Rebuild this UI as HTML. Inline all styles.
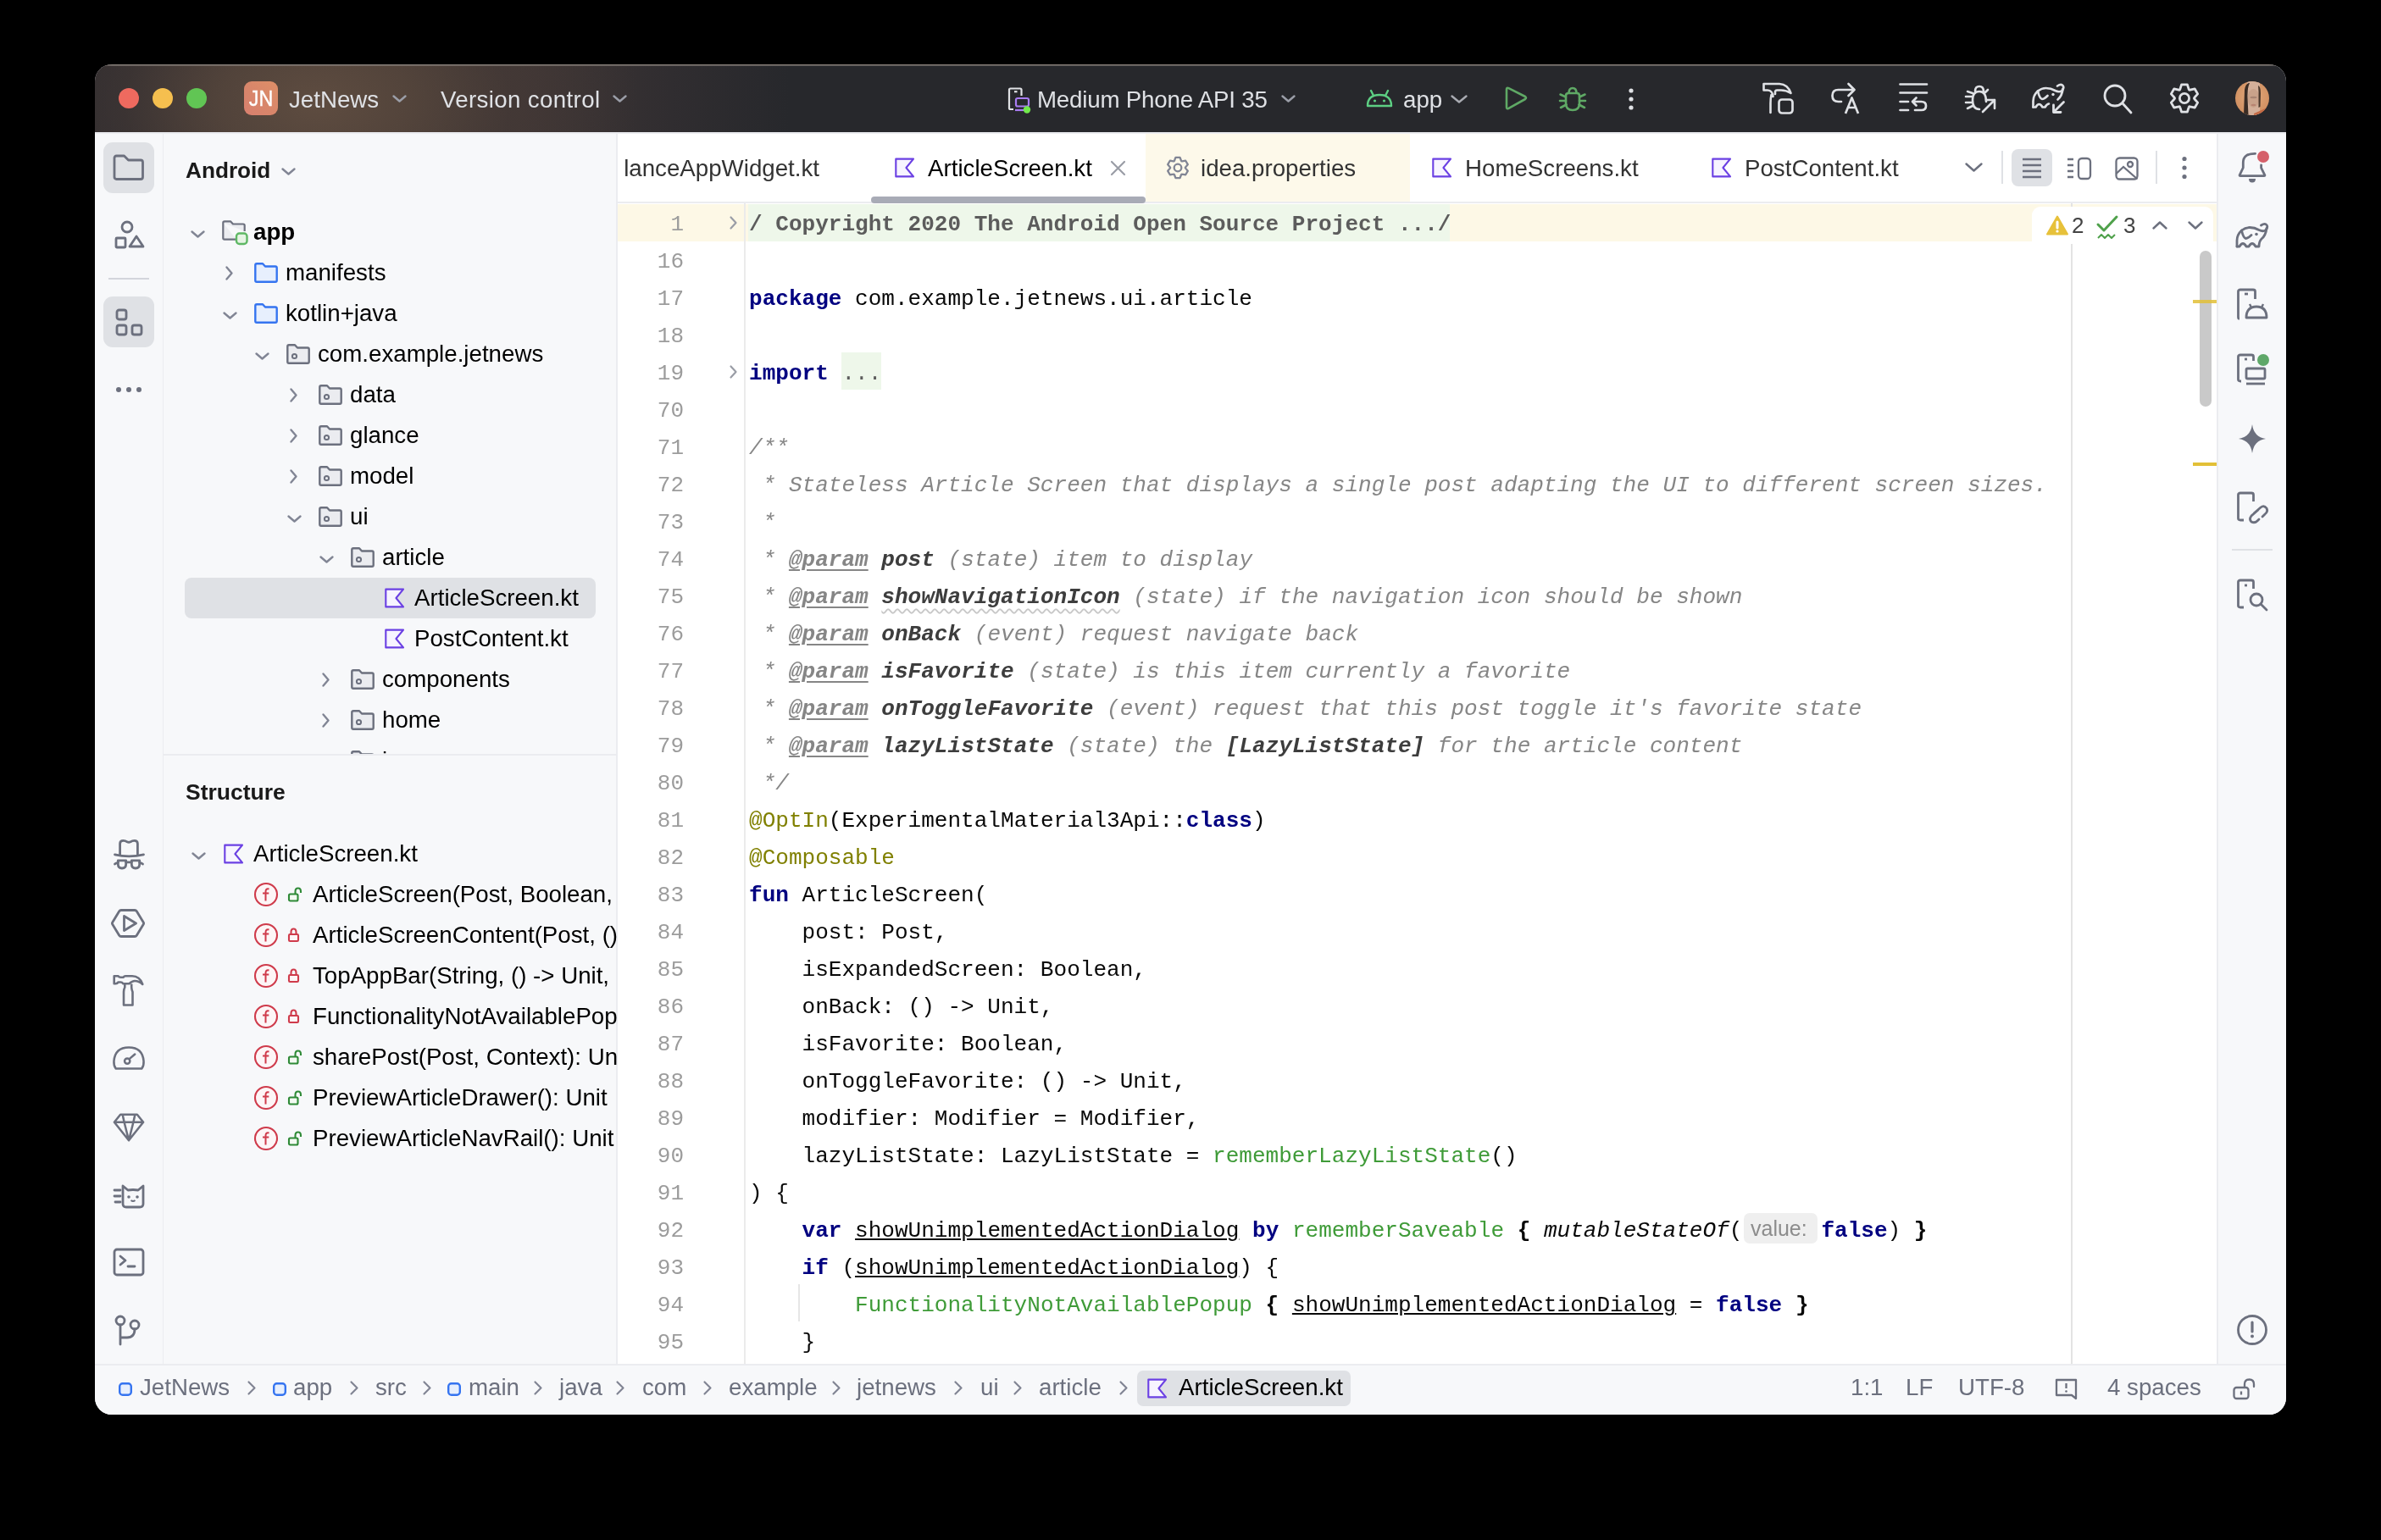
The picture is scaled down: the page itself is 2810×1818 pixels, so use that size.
<!DOCTYPE html><html><head><meta charset="utf-8"><style>
*{margin:0;padding:0;box-sizing:border-box}
html,body{width:2810px;height:1818px;background:#000;overflow:hidden}
body{font-family:"Liberation Sans",sans-serif;position:relative}
.a{position:absolute}
#win{will-change:transform;position:absolute;left:112px;top:76px;width:2586px;height:1594px;border-radius:20px;overflow:hidden;background:#f7f8fa}
#title{position:absolute;left:0;top:0;width:2586px;height:80px;
 background:
  radial-gradient(ellipse 380px 240px at 262px 45px, rgba(94,76,64,1) 0%, rgba(86,70,60,0.85) 30%, rgba(70,58,54,0.55) 60%, rgba(39,40,44,0) 100%),
  linear-gradient(90deg,#2b2a2e 0px,#2e2c2f 60px,#3a3433 180px,#3f3635 500px,#302d30 680px,#27282c 820px,#27282c 100%);
 box-shadow:inset 0 1.5px 0 #8a827c}
.tt{position:absolute;color:#dfe1e5;font-size:27.7px;line-height:40px;white-space:nowrap}
.ui{position:absolute;font-size:27.7px;line-height:48px;white-space:nowrap;color:#000}
.code{position:absolute;left:883px;font-family:"Liberation Mono",monospace;font-size:26.05px;line-height:44px;white-space:pre;color:#080808}
.ln{position:absolute;left:729px;width:77px;text-align:right;font-family:"Liberation Mono",monospace;font-size:26px;line-height:44px;color:#9c9c9c}
.kw{color:#000080;font-weight:bold}
.cm{color:#868686;font-style:italic}
.dt{color:#868686;font-style:italic;font-weight:bold;text-decoration:underline;text-underline-offset:4px;text-decoration-thickness:2px}
.dp{color:#3d3d3d;font-style:italic;font-weight:bold}
.an{color:#808000}
.fn{color:#3f9b38}
.ul{text-decoration:underline;text-underline-offset:2px;text-decoration-thickness:1.5px}
.it{font-style:italic}
.bd{font-weight:bold}
svg{position:absolute;overflow:visible}
</style></head><body>
<div id="win">
<div id="title">
<div class="a" style="left:28px;top:28px;width:24px;height:24px;border-radius:12px;background:#ee6a5f"></div>
<div class="a" style="left:68px;top:28px;width:24px;height:24px;border-radius:12px;background:#f5bf4f"></div>
<div class="a" style="left:108px;top:28px;width:24px;height:24px;border-radius:12px;background:#61c554"></div>
<div class="a" style="left:176px;top:20px;width:40px;height:40px;border-radius:9px;background:linear-gradient(45deg,#d9806f,#d8866a 50%,#de8f68)"></div>
<div class="tt" style="left:176px;top:20px;width:40px;text-align:center;color:#fff;font-size:26.5px;transform:scaleX(0.88);-webkit-text-stroke:0.4px #fff">JN</div>
<div class="tt" style="left:229px;top:22px">JetNews</div>
<svg class="a" style="left:351px;top:36px" width="17" height="9" viewBox="0 0 17 9" ><path d="M1.5 1.5 L8.5 7.5 L15.5 1.5" fill="none" stroke="#9b9ea8" stroke-width="2.4" stroke-linecap="round" stroke-linejoin="round"/></svg>
<div class="tt" style="left:408px;top:22px;letter-spacing:0.35px">Version control</div>
<svg class="a" style="left:611px;top:36px" width="17" height="9" viewBox="0 0 17 9" ><path d="M1.5 1.5 L8.5 7.5 L15.5 1.5" fill="none" stroke="#9b9ea8" stroke-width="2.4" stroke-linecap="round" stroke-linejoin="round"/></svg>
<svg class="a" style="left:1077px;top:27px" width="30" height="32" viewBox="0 0 30 32" ><path d="M7 26 H3.5 Q2 26 2 24.5 V3 Q2 1.5 3.5 1.5 H15 Q16.5 1.5 16.5 3 V10" fill="none" stroke="#dfe1e5" stroke-width="2.2"/><path d="M8 5.2 H11.5" stroke="#dfe1e5" stroke-width="2.2"/><rect x="10" y="13" width="15" height="9.5" rx="2" fill="none" stroke="#a97cf2" stroke-width="2.2"/><path d="M9 27 H22" stroke="#a97cf2" stroke-width="2.2"/><circle cx="23" cy="26.5" r="4.2" fill="#72e84c"/></svg>
<div class="tt" style="left:1112px;top:22px;letter-spacing:-0.2px">Medium Phone API 35</div>
<svg class="a" style="left:1400px;top:36px" width="17" height="9" viewBox="0 0 17 9" ><path d="M1.5 1.5 L8.5 7.5 L15.5 1.5" fill="none" stroke="#9b9ea8" stroke-width="2.4" stroke-linecap="round" stroke-linejoin="round"/></svg>
<svg class="a" style="left:1500px;top:27px" width="32" height="26" viewBox="0 0 32 26" ><path d="M2 22 Q2 9 16 9 Q30 9 30 22 Z" fill="none" stroke="#5dcf83" stroke-width="2.4" stroke-linejoin="round"/><path d="M6 4 L9 10 M26 4 L23 10" stroke="#5dcf83" stroke-width="2.4" stroke-linecap="round"/><circle cx="10.5" cy="16" r="1.6" fill="#5dcf83"/><circle cx="21.5" cy="16" r="1.6" fill="#5dcf83"/></svg>
<div class="tt" style="left:1544px;top:22px">app</div>
<svg class="a" style="left:1600px;top:36px" width="20" height="10" viewBox="0 0 20 10" ><path d="M1.5 1.5 L10.0 8.5 L18.5 1.5" fill="none" stroke="#a9abb2" stroke-width="2.4" stroke-linecap="round" stroke-linejoin="round"/></svg>
<svg class="a" style="left:1662px;top:25px" width="30" height="30" viewBox="0 0 30 30" ><path d="M4 4.5 Q4 2 6.5 3.2 L26 13 Q28 14.5 26 16 L6.5 26.8 Q4 28 4 25.5 Z" fill="none" stroke="#5fa965" stroke-width="2.6" stroke-linejoin="round"/></svg>
<svg class="a" style="left:1727px;top:24px" width="34" height="34" viewBox="0 0 34 34" ><path d="M9 13 Q9 10 12 10 H22 Q25 10 25 13 V22 Q25 30 17 30 Q9 30 9 22 Z" fill="none" stroke="#5fa965" stroke-width="2.6" stroke-linejoin="round"/><path d="M12.5 10 Q12.5 4 17 4 Q21.5 4 21.5 10" fill="none" stroke="#5fa965" stroke-width="2.6"/><path d="M2.5 11.5 L9 14.5 M31.5 11.5 L25 14.5 M2 19 H9 M32 19 H25 M3 27 L9.5 23.5 M31 27 L24.5 23.5" stroke="#5fa965" stroke-width="2.6" stroke-linecap="round"/></svg>
<svg class="a" style="left:1808px;top:28px" width="10" height="26" viewBox="0 0 10 26" ><circle cx="5" cy="3" r="2.6" fill="#dfe1e5"/><circle cx="5" cy="13" r="2.6" fill="#dfe1e5"/><circle cx="5" cy="23" r="2.6" fill="#dfe1e5"/></svg>
<svg class="a" style="left:1966px;top:20px" width="40" height="40" viewBox="0 0 40 40" ><path d="M3.5 3 H22 Q32 3.5 35.5 14 Q30 10.5 24 10.5 H19 Q17.5 10.5 17 12 V15 M3.5 3 V10.5 H8 Q11 10.5 12.5 12.5 Q14.5 15 14.5 18 M12.5 16 Q11.5 20 11.5 26 V37" fill="none" stroke="#dfe1e5" stroke-width="2.6" stroke-linejoin="round" stroke-linecap="round"/><rect x="21.5" y="21.5" width="16" height="16" rx="3.5" fill="none" stroke="#dfe1e5" stroke-width="2.7"/></svg>
<svg class="a" style="left:2048px;top:20px" width="38" height="40" viewBox="0 0 38 40" ><path d="M13 24 H9.5 Q2.5 24 2.5 17 Q2.5 10 9.5 10 H28.5 M21.5 3 L28.5 10 L21.5 17" fill="none" stroke="#dfe1e5" stroke-width="2.7" stroke-linecap="round" stroke-linejoin="round"/><path d="M18 38 L25.5 19.5 L33 38 M20.8 31 H30.2" fill="none" stroke="#dfe1e5" stroke-width="2.7" stroke-linejoin="round"/></svg>
<svg class="a" style="left:2128px;top:20px" width="36" height="40" viewBox="0 0 36 40" ><path d="M2.5 3.5 H34 M2.5 13.5 H34 M2.5 24 H12 M2.5 34 H12 M21.5 19.5 L17 24 L21.5 28.5 M17 24 H27.5 Q33 24 33 29 Q33 34 27.5 34 H20" fill="none" stroke="#dfe1e5" stroke-width="2.7" stroke-linecap="round" stroke-linejoin="round"/></svg>
<svg class="a" style="left:2206px;top:20px" width="40" height="40" viewBox="0 0 40 40" ><path d="M26 24 Q26 12 18 12 Q10 12 10 22 Q10 33 18 33 M13 12 Q13 6 18 6 Q23 6 23 12 M2 18 H9 M2 25 H9 M4 32 L10 29 M4 12 L10 14 M28 10 L25 13" fill="none" stroke="#dfe1e5" stroke-width="2.6" stroke-linecap="round"/><path d="M22 36 L36 22 M26 22 H36 V32" fill="none" stroke="#dfe1e5" stroke-width="2.6" stroke-linecap="round" stroke-linejoin="round"/></svg>
<svg class="a" style="left:2282px;top:18px" width="48" height="44" viewBox="0 0 48 44" ><g transform="translate(-4.5,-8.5)" fill="none" stroke="#dfe1e5" stroke-width="2.7" stroke-linecap="round" stroke-linejoin="round"><path d="M10 41 V34 Q10 27 15.5 22 Q20 18.5 25 18.5 Q31 18.5 36 21.5 Q41 24 44 21.5 Q47 18 45 15.5 Q43 13 38.5 16"/><path d="M45 19.5 Q44 28 39 32"/><path d="M10 41 H13 Q15 37.5 17 37.5 Q19 37.5 21 41 H24 Q26 37.5 28.5 37"/><path d="M15.5 22 Q17.5 31 20.5 31.5 Q23 31.5 27 27.5"/><circle cx="33.5" cy="26" r="1.7" fill="#dfe1e5" stroke="none"/></g><path d="M41.5 26.5 L30 38 M29.5 30 V38.5 H38" fill="none" stroke="#dfe1e5" stroke-width="2.8" stroke-linecap="round" stroke-linejoin="round"/></svg>
<svg class="a" style="left:2369px;top:22px" width="36" height="38" viewBox="0 0 36 38" ><circle cx="15" cy="15" r="12" fill="none" stroke="#dfe1e5" stroke-width="2.8"/><path d="M24 24 L34 35" stroke="#dfe1e5" stroke-width="2.8" stroke-linecap="round"/></svg>
<svg class="a" style="left:2448px;top:22px" width="36" height="36" viewBox="0 0 36 36" ><path d="M12.83 7.39 L14.57 1.86 L21.43 1.86 L23.17 7.39 Q23.49 8.50 24.60 8.22 L24.60 8.22 L30.26 6.96 L33.69 12.90 L29.77 17.18 Q28.97 18.00 29.77 18.82 L29.77 18.82 L33.69 23.10 L30.26 29.04 L24.60 27.78 Q23.49 27.50 23.17 28.61 L23.17 28.61 L21.43 34.14 L14.57 34.14 L12.83 28.61 Q12.51 27.50 11.40 27.78 L11.40 27.78 L5.74 29.04 L2.31 23.10 L6.23 18.82 Q7.03 18.00 6.23 17.18 L6.23 17.18 L2.31 12.90 L5.74 6.96 L11.40 8.22 Q12.51 8.50 12.83 7.39 Z" fill="none" stroke="#dfe1e5" stroke-width="2.8" stroke-linejoin="round"/><circle cx="18" cy="18" r="5.6" fill="none" stroke="#dfe1e5" stroke-width="2.8"/></svg>
<svg class="a" style="left:2526px;top:20px" width="40" height="40" viewBox="0 0 40 40" ><defs><clipPath id="avc"><circle cx="20" cy="20" r="20"/></clipPath><radialGradient id="avg" cx="0.5" cy="0.45" r="0.6"><stop offset="0" stop-color="#e2ab7e"/><stop offset="1" stop-color="#cf8d5e"/></radialGradient></defs><g clip-path="url(#avc)"><rect width="40" height="40" fill="url(#avg)"/><rect x="14" y="0" width="15" height="40" fill="#d4b09a"/><ellipse cx="21.5" cy="20" rx="7" ry="11" fill="#c9a28a"/><path d="M22 38 L40 30 V40 H22 Z" fill="#c46a45"/><path d="M10 40 L11 10 Q12 3 16 2 L17 2 Q14 8 14.5 20 L15.5 40 Z" fill="#3a2c24"/><path d="M27 5 Q30 6 30 14 L29.5 30 L27.5 31 L27.5 12 Z" fill="#4a382c"/><ellipse cx="21.5" cy="19" rx="4" ry="1.2" fill="#9a7868" opacity="0.7"/><ellipse cx="21.5" cy="28" rx="3" ry="1.3" fill="#b07868" opacity="0.7"/></g></svg>
</div>
<div class="a" style="left:0;top:80px;width:2586px;height:2px;background:#ebecf0"></div>
<div class="a" style="left:0;top:82px;width:81px;height:1452px;background:#f7f8fa;border-right:1px solid #ebecf0"></div>
<div class="a" style="left:81px;top:82px;width:536px;height:1452px;background:#f7f8fa;border-right:2px solid #ebecf0"></div>
<div class="a" style="left:10px;top:92px;width:60px;height:60px;border-radius:11px;background:#dfe1e5"></div>
<div class="a" style="left:10px;top:274px;width:60px;height:60px;border-radius:11px;background:#dfe1e5"></div>
<div class="a" style="left:16px;top:252px;width:48px;height:2px;background:#d3d5dc"></div>
<svg class="a" style="left:21px;top:106px" width="38" height="32" viewBox="0 0 38 32" ><path d="M2 4.5 Q2 2 4.5 2 H13.5 L18.5 7 H33 Q35.5 7 35.5 9.5 V27 Q35.5 29.5 33 29.5 H4.5 Q2 29.5 2 27 Z" fill="none" stroke="#6c707e" stroke-width="2.8" stroke-linejoin="round"/></svg>
<svg class="a" style="left:23px;top:184px" width="38" height="36" viewBox="0 0 38 36" ><circle cx="15" cy="8" r="6" fill="none" stroke="#6c707e" stroke-width="2.8"/><rect x="2" y="21" width="11" height="11" rx="1" fill="none" stroke="#6c707e" stroke-width="2.8"/><path d="M26 19 L34 31 H18 Z" fill="none" stroke="#6c707e" stroke-width="2.8" stroke-linejoin="round"/></svg>
<svg class="a" style="left:24px;top:288px" width="36" height="34" viewBox="0 0 36 34" ><rect x="2" y="2" width="11" height="11" rx="2.5" fill="none" stroke="#6c707e" stroke-width="2.8"/><rect x="2" y="20" width="11" height="11" rx="2.5" fill="none" stroke="#6c707e" stroke-width="2.8"/><rect x="20" y="20" width="11" height="11" rx="2.5" fill="none" stroke="#6c707e" stroke-width="2.8"/></svg>
<svg class="a" style="left:24px;top:379px" width="32" height="10" viewBox="0 0 32 10" ><circle cx="4" cy="5" r="3" fill="#6c707e"/><circle cx="16" cy="5" r="3" fill="#6c707e"/><circle cx="28" cy="5" r="3" fill="#6c707e"/></svg>
<svg class="a" style="left:10px;top:904px" width="60" height="56" viewBox="0 0 60 56" ><g fill="none" stroke="#6c707e" stroke-width="2.8" stroke-linecap="round" stroke-linejoin="round"><path d="M19.6 28.5 V16 Q19.6 12.4 23.5 12.4 Q26 12.4 28 13.8 Q30 14.8 32 13.8 Q34 12.4 36.5 12.4 Q40.4 12.4 40.4 16 V28.5"/><path d="M13.5 28.8 Q30 32.8 47.5 28.8"/><path d="M17.3 35.8 H26.7 V40 Q26.7 45 22 45 Q17.3 45 17.3 40 Z"/><path d="M33.3 35.8 H42.7 V40 Q42.7 45 38 45 Q33.3 45 33.3 40 Z"/><path d="M26.7 37.8 H33.3 M13.5 40 Q15 38.6 17.3 38.3 M42.7 38.3 Q45 38.6 46.5 40"/></g></svg>
<svg class="a" style="left:19px;top:995px" width="42" height="38" viewBox="0 0 42 38" ><path d="M12 3.5 H28 Q29.5 3.5 30.3 4.8 L38.2 17.7 Q39 19 38.2 20.3 L30.3 33.2 Q29.5 34.5 28 34.5 H12 Q10.5 34.5 9.7 33.2 L1.8 20.3 Q1 19 1.8 17.7 L9.7 4.8 Q10.5 3.5 12 3.5 Z" fill="none" stroke="#6c707e" stroke-width="2.8" stroke-linejoin="round"/><path d="M15.5 10.5 L29.5 19 L15.5 27.5 Z" fill="none" stroke="#6c707e" stroke-width="2.8" stroke-linejoin="round"/></svg>
<svg class="a" style="left:19px;top:1074px" width="40" height="40" viewBox="0 0 40 40" ><path d="M3.7 2.3 H8.5 Q9.5 3.8 11.5 3.8 H14.5 Q15.5 2.3 17 2.3 H25 Q34 2.3 37.3 12 Q33 8 28 8 Q25 8 21.5 11.3 H14.5 Q13 9.5 11.5 9.5 H8.5 Q7.5 11.3 5.5 11.3 H3.7 Z" fill="none" stroke="#6c707e" stroke-width="2.6" stroke-linejoin="round"/><path d="M16.3 11.5 V15.5 Q15 18 15 21 V36.5 H25.5 V21 Q24.2 18 24.2 15.5 V11.5" fill="none" stroke="#6c707e" stroke-width="2.6" stroke-linejoin="round"/></svg>
<svg class="a" style="left:19px;top:1157px" width="42" height="32" viewBox="0 0 42 32" ><g transform="translate(21,16) scale(0.9) translate(-21,-16)"><path d="M4 30 Q1 26 1.5 20 Q3 2 21 2 Q39 2 40.5 20 Q41 26 38 30 Z" fill="none" stroke="#6c707e" stroke-width="2.8" stroke-linejoin="round"/><circle cx="19" cy="20" r="3.5" fill="none" stroke="#6c707e" stroke-width="2.8"/><path d="M22 17 L29 11" stroke="#6c707e" stroke-width="2.8" stroke-linecap="round"/></g></svg>
<svg class="a" style="left:19px;top:1236px" width="42" height="38" viewBox="0 0 42 38" ><g transform="translate(21,19) scale(0.9) translate(-21,-19)"><path d="M10 2 H32 L40 12 L21 36 L2 12 Z M2 12 H40 M15 12 L21 36 L27 12 M15 12 L13 3 M27 12 L29 3" fill="none" stroke="#6c707e" stroke-width="2.8" stroke-linejoin="round"/></g></svg>
<svg class="a" style="left:21px;top:1320px" width="40" height="32" viewBox="0 0 40 32" ><path d="M12 4 L18 9 Q24 8 30 9 L36 4 V25 Q36 29 32 29 H16 Q12 29 12 25 Z" fill="none" stroke="#6c707e" stroke-width="2.8" stroke-linejoin="round"/><path d="M2 9 H9 M2 16 H9 M3 23 H9" stroke="#6c707e" stroke-width="2.8" stroke-linecap="round"/><circle cx="19" cy="17" r="1.8" fill="#6c707e"/><circle cx="29" cy="17" r="1.8" fill="#6c707e"/><path d="M21.5 21 Q24 23 26.5 21" fill="none" stroke="#6c707e" stroke-width="2"/></svg>
<svg class="a" style="left:21px;top:1397px" width="38" height="34" viewBox="0 0 38 34" ><rect x="2" y="2" width="34" height="30" rx="3" fill="none" stroke="#6c707e" stroke-width="2.8"/><path d="M9 10 L15 15 L9 20" fill="none" stroke="#6c707e" stroke-width="2.8" stroke-linecap="round" stroke-linejoin="round"/><path d="M18 22 H26" stroke="#6c707e" stroke-width="2.8" stroke-linecap="round"/></svg>
<svg class="a" style="left:22px;top:1475px" width="36" height="38" viewBox="0 0 36 38" ><circle cx="8" cy="8" r="5" fill="none" stroke="#6c707e" stroke-width="2.8"/><circle cx="25" cy="13" r="5" fill="none" stroke="#6c707e" stroke-width="2.8"/><path d="M8 13 V36 M8 28 H16 Q25 28 25 18" fill="none" stroke="#6c707e" stroke-width="2.8" stroke-linecap="round"/></svg>
<div class="ui bd" style="left:107px;top:101px;font-size:26.2px;color:#1a1a1a">Android</div>
<svg class="a" style="left:220px;top:122px" width="17" height="9" viewBox="0 0 17 9" ><path d="M1.5 1.5 L8.5 7.5 L15.5 1.5" fill="none" stroke="#818594" stroke-width="2.4" stroke-linecap="round" stroke-linejoin="round"/></svg>
<div class="a" style="left:81px;top:82px;width:535px;height:733px;overflow:hidden">
<div class="a" style="left:25px;top:524px;width:485px;height:48px;border-radius:8px;background:#dfe1e5"></div>
<svg class="a" style="left:32px;top:114px" width="17" height="9" viewBox="0 0 17 9" ><path d="M1.5 1.5 L8.5 7.5 L15.5 1.5" fill="none" stroke="#818594" stroke-width="2.4" stroke-linecap="round" stroke-linejoin="round"/></svg>
<svg class="a" style="left:69px;top:102px" width="31" height="29" viewBox="0 0 31 29" ><path d="M1.3 3 Q1.3 1.3 3 1.3 H10 L13 4.5 H25 Q26.7 4.5 26.7 6.2 V13 M17 22.7 H3 Q1.3 22.7 1.3 21 V3" fill="#ebecf0" stroke="#6c707e" stroke-width="2.2" stroke-linejoin="round"/><rect x="17" y="15.5" width="12.5" height="12.5" rx="3.5" fill="#e6f4e4" stroke="#5fb865" stroke-width="2.4"/></svg>
<div class="ui bd" style="left:106px;top:92px">app</div>
<svg class="a" style="left:73px;top:156px" width="9" height="17" viewBox="0 0 9 17" ><path d="M1.5 1.5 L7.5 8.5 L1.5 15.5" fill="none" stroke="#818594" stroke-width="2.4" stroke-linecap="round" stroke-linejoin="round"/></svg>
<svg class="a" style="left:107px;top:152px" width="28" height="24" viewBox="0 0 28 24" ><path d="M1.3 3 Q1.3 1.3 3 1.3 H10 L13 4.5 H25 Q26.7 4.5 26.7 6.2 V21 Q26.7 22.7 25 22.7 H3 Q1.3 22.7 1.3 21 Z" fill="#e7effd" stroke="#3574f0" stroke-width="2.4" stroke-linejoin="round"/></svg>
<div class="ui" style="left:144px;top:140px">manifests</div>
<svg class="a" style="left:70px;top:210px" width="17" height="9" viewBox="0 0 17 9" ><path d="M1.5 1.5 L8.5 7.5 L15.5 1.5" fill="none" stroke="#818594" stroke-width="2.4" stroke-linecap="round" stroke-linejoin="round"/></svg>
<svg class="a" style="left:107px;top:200px" width="28" height="24" viewBox="0 0 28 24" ><path d="M1.3 3 Q1.3 1.3 3 1.3 H10 L13 4.5 H25 Q26.7 4.5 26.7 6.2 V21 Q26.7 22.7 25 22.7 H3 Q1.3 22.7 1.3 21 Z" fill="#e7effd" stroke="#3574f0" stroke-width="2.4" stroke-linejoin="round"/></svg>
<div class="ui" style="left:144px;top:188px">kotlin+java</div>
<svg class="a" style="left:108px;top:258px" width="17" height="9" viewBox="0 0 17 9" ><path d="M1.5 1.5 L8.5 7.5 L15.5 1.5" fill="none" stroke="#818594" stroke-width="2.4" stroke-linecap="round" stroke-linejoin="round"/></svg>
<svg class="a" style="left:145px;top:248px" width="28" height="24" viewBox="0 0 28 24" ><path d="M1.3 3 Q1.3 1.3 3 1.3 H10 L13 4.5 H25 Q26.7 4.5 26.7 6.2 V21 Q26.7 22.7 25 22.7 H3 Q1.3 22.7 1.3 21 Z" fill="#ebecf0" stroke="#6c707e" stroke-width="2.4" stroke-linejoin="round"/><circle cx="9.5" cy="14.5" r="2.6" fill="none" stroke="#6c707e" stroke-width="2"/></svg>
<div class="ui" style="left:182px;top:236px">com.example.jetnews</div>
<svg class="a" style="left:149px;top:300px" width="9" height="17" viewBox="0 0 9 17" ><path d="M1.5 1.5 L7.5 8.5 L1.5 15.5" fill="none" stroke="#818594" stroke-width="2.4" stroke-linecap="round" stroke-linejoin="round"/></svg>
<svg class="a" style="left:183px;top:296px" width="28" height="24" viewBox="0 0 28 24" ><path d="M1.3 3 Q1.3 1.3 3 1.3 H10 L13 4.5 H25 Q26.7 4.5 26.7 6.2 V21 Q26.7 22.7 25 22.7 H3 Q1.3 22.7 1.3 21 Z" fill="#ebecf0" stroke="#6c707e" stroke-width="2.4" stroke-linejoin="round"/><circle cx="9.5" cy="14.5" r="2.6" fill="none" stroke="#6c707e" stroke-width="2"/></svg>
<div class="ui" style="left:220px;top:284px">data</div>
<svg class="a" style="left:149px;top:348px" width="9" height="17" viewBox="0 0 9 17" ><path d="M1.5 1.5 L7.5 8.5 L1.5 15.5" fill="none" stroke="#818594" stroke-width="2.4" stroke-linecap="round" stroke-linejoin="round"/></svg>
<svg class="a" style="left:183px;top:344px" width="28" height="24" viewBox="0 0 28 24" ><path d="M1.3 3 Q1.3 1.3 3 1.3 H10 L13 4.5 H25 Q26.7 4.5 26.7 6.2 V21 Q26.7 22.7 25 22.7 H3 Q1.3 22.7 1.3 21 Z" fill="#ebecf0" stroke="#6c707e" stroke-width="2.4" stroke-linejoin="round"/><circle cx="9.5" cy="14.5" r="2.6" fill="none" stroke="#6c707e" stroke-width="2"/></svg>
<div class="ui" style="left:220px;top:332px">glance</div>
<svg class="a" style="left:149px;top:396px" width="9" height="17" viewBox="0 0 9 17" ><path d="M1.5 1.5 L7.5 8.5 L1.5 15.5" fill="none" stroke="#818594" stroke-width="2.4" stroke-linecap="round" stroke-linejoin="round"/></svg>
<svg class="a" style="left:183px;top:392px" width="28" height="24" viewBox="0 0 28 24" ><path d="M1.3 3 Q1.3 1.3 3 1.3 H10 L13 4.5 H25 Q26.7 4.5 26.7 6.2 V21 Q26.7 22.7 25 22.7 H3 Q1.3 22.7 1.3 21 Z" fill="#ebecf0" stroke="#6c707e" stroke-width="2.4" stroke-linejoin="round"/><circle cx="9.5" cy="14.5" r="2.6" fill="none" stroke="#6c707e" stroke-width="2"/></svg>
<div class="ui" style="left:220px;top:380px">model</div>
<svg class="a" style="left:146px;top:450px" width="17" height="9" viewBox="0 0 17 9" ><path d="M1.5 1.5 L8.5 7.5 L15.5 1.5" fill="none" stroke="#818594" stroke-width="2.4" stroke-linecap="round" stroke-linejoin="round"/></svg>
<svg class="a" style="left:183px;top:440px" width="28" height="24" viewBox="0 0 28 24" ><path d="M1.3 3 Q1.3 1.3 3 1.3 H10 L13 4.5 H25 Q26.7 4.5 26.7 6.2 V21 Q26.7 22.7 25 22.7 H3 Q1.3 22.7 1.3 21 Z" fill="#ebecf0" stroke="#6c707e" stroke-width="2.4" stroke-linejoin="round"/><circle cx="9.5" cy="14.5" r="2.6" fill="none" stroke="#6c707e" stroke-width="2"/></svg>
<div class="ui" style="left:220px;top:428px">ui</div>
<svg class="a" style="left:184px;top:498px" width="17" height="9" viewBox="0 0 17 9" ><path d="M1.5 1.5 L8.5 7.5 L15.5 1.5" fill="none" stroke="#818594" stroke-width="2.4" stroke-linecap="round" stroke-linejoin="round"/></svg>
<svg class="a" style="left:221px;top:488px" width="28" height="24" viewBox="0 0 28 24" ><path d="M1.3 3 Q1.3 1.3 3 1.3 H10 L13 4.5 H25 Q26.7 4.5 26.7 6.2 V21 Q26.7 22.7 25 22.7 H3 Q1.3 22.7 1.3 21 Z" fill="#ebecf0" stroke="#6c707e" stroke-width="2.4" stroke-linejoin="round"/><circle cx="9.5" cy="14.5" r="2.6" fill="none" stroke="#6c707e" stroke-width="2"/></svg>
<div class="ui" style="left:258px;top:476px">article</div>
<svg class="a" style="left:261px;top:536px" width="24" height="24" viewBox="0 0 24 24" ><path d="M1.3 1.6 H22 L13.440000000000001 12.0 L22 22.4 H1.3 Z" fill="#f7f4ff" stroke="#6b40e3" stroke-width="2.1" stroke-linejoin="round"/></svg>
<div class="ui" style="left:296px;top:524px">ArticleScreen.kt</div>
<svg class="a" style="left:261px;top:584px" width="24" height="24" viewBox="0 0 24 24" ><path d="M1.3 1.6 H22 L13.440000000000001 12.0 L22 22.4 H1.3 Z" fill="#f7f4ff" stroke="#6b40e3" stroke-width="2.1" stroke-linejoin="round"/></svg>
<div class="ui" style="left:296px;top:572px">PostContent.kt</div>
<svg class="a" style="left:187px;top:636px" width="9" height="17" viewBox="0 0 9 17" ><path d="M1.5 1.5 L7.5 8.5 L1.5 15.5" fill="none" stroke="#818594" stroke-width="2.4" stroke-linecap="round" stroke-linejoin="round"/></svg>
<svg class="a" style="left:221px;top:632px" width="28" height="24" viewBox="0 0 28 24" ><path d="M1.3 3 Q1.3 1.3 3 1.3 H10 L13 4.5 H25 Q26.7 4.5 26.7 6.2 V21 Q26.7 22.7 25 22.7 H3 Q1.3 22.7 1.3 21 Z" fill="#ebecf0" stroke="#6c707e" stroke-width="2.4" stroke-linejoin="round"/><circle cx="9.5" cy="14.5" r="2.6" fill="none" stroke="#6c707e" stroke-width="2"/></svg>
<div class="ui" style="left:258px;top:620px">components</div>
<svg class="a" style="left:187px;top:684px" width="9" height="17" viewBox="0 0 9 17" ><path d="M1.5 1.5 L7.5 8.5 L1.5 15.5" fill="none" stroke="#818594" stroke-width="2.4" stroke-linecap="round" stroke-linejoin="round"/></svg>
<svg class="a" style="left:221px;top:680px" width="28" height="24" viewBox="0 0 28 24" ><path d="M1.3 3 Q1.3 1.3 3 1.3 H10 L13 4.5 H25 Q26.7 4.5 26.7 6.2 V21 Q26.7 22.7 25 22.7 H3 Q1.3 22.7 1.3 21 Z" fill="#ebecf0" stroke="#6c707e" stroke-width="2.4" stroke-linejoin="round"/><circle cx="9.5" cy="14.5" r="2.6" fill="none" stroke="#6c707e" stroke-width="2"/></svg>
<div class="ui" style="left:258px;top:668px">home</div>
<svg class="a" style="left:187px;top:732px" width="9" height="17" viewBox="0 0 9 17" ><path d="M1.5 1.5 L7.5 8.5 L1.5 15.5" fill="none" stroke="#818594" stroke-width="2.4" stroke-linecap="round" stroke-linejoin="round"/></svg>
<svg class="a" style="left:221px;top:728px" width="28" height="24" viewBox="0 0 28 24" ><path d="M1.3 3 Q1.3 1.3 3 1.3 H10 L13 4.5 H25 Q26.7 4.5 26.7 6.2 V21 Q26.7 22.7 25 22.7 H3 Q1.3 22.7 1.3 21 Z" fill="#ebecf0" stroke="#6c707e" stroke-width="2.4" stroke-linejoin="round"/><circle cx="9.5" cy="14.5" r="2.6" fill="none" stroke="#6c707e" stroke-width="2"/></svg>
<div class="ui" style="left:258px;top:716px">i</div>
</div>
<div class="a" style="left:81px;top:814px;width:535px;height:2px;background:#ebecf0"></div>
<div class="ui bd" style="left:107px;top:835px;font-size:26.5px;color:#1a1a1a">Structure</div>
<div class="a" style="left:81px;top:884px;width:535px;height:650px;overflow:hidden">
<svg class="a" style="left:33px;top:46px" width="17" height="9" viewBox="0 0 17 9" ><path d="M1.5 1.5 L8.5 7.5 L15.5 1.5" fill="none" stroke="#818594" stroke-width="2.4" stroke-linecap="round" stroke-linejoin="round"/></svg>
<svg class="a" style="left:71px;top:36px" width="24" height="24" viewBox="0 0 24 24" ><path d="M1.3 1.6 H22 L13.440000000000001 12.0 L22 22.4 H1.3 Z" fill="#f7f4ff" stroke="#6b40e3" stroke-width="2.1" stroke-linejoin="round"/></svg>
<div class="ui" style="left:106px;top:24px">ArticleScreen.kt</div>
<svg class="a" style="left:107px;top:82px" width="28" height="28" viewBox="0 0 28 28" ><circle cx="14" cy="14" r="13" fill="#fdf5f6" stroke="#cf3b4b" stroke-width="2.1"/><path d="M17.5 7.5 Q15.3 7 14.3 8 Q13.5 8.8 13.5 10.8 V21.5 M10 12.5 H17.3" fill="none" stroke="#cf3b4b" stroke-width="2.0"/></svg>
<svg class="a" style="left:146px;top:87px" width="18" height="18" viewBox="0 0 18 18" ><rect x="2" y="8.5" width="10.5" height="8" rx="1.5" fill="#f3faf2" stroke="#2f8a37" stroke-width="2.1"/><path d="M9.5 8.5 V5.5 Q9.5 1.5 12.8 1.5 Q16 1.5 16 5.5 V7" fill="none" stroke="#2f8a37" stroke-width="2.1"/></svg>
<div class="ui" style="left:176px;top:72px">ArticleScreen(Post, Boolean, () -&gt; Unit, Boolean, () -&gt; Unit, Modifier, LazyListState): Unit</div>
<svg class="a" style="left:107px;top:130px" width="28" height="28" viewBox="0 0 28 28" ><circle cx="14" cy="14" r="13" fill="#fdf5f6" stroke="#cf3b4b" stroke-width="2.1"/><path d="M17.5 7.5 Q15.3 7 14.3 8 Q13.5 8.8 13.5 10.8 V21.5 M10 12.5 H17.3" fill="none" stroke="#cf3b4b" stroke-width="2.0"/></svg>
<svg class="a" style="left:146px;top:135px" width="15" height="17" viewBox="0 0 15 17" ><rect x="2" y="8" width="11" height="8" rx="1.2" fill="#fdf5f6" stroke="#cf3b4b" stroke-width="2.1"/><path d="M4.5 8 V5.5 Q4.5 1.5 7.5 1.5 Q10.5 1.5 10.5 5.5 V8" fill="none" stroke="#cf3b4b" stroke-width="2.1"/></svg>
<div class="ui" style="left:176px;top:120px">ArticleScreenContent(Post, () -&gt; Unit, Boolean, () -&gt; Unit, Modifier, LazyListState): Unit</div>
<svg class="a" style="left:107px;top:178px" width="28" height="28" viewBox="0 0 28 28" ><circle cx="14" cy="14" r="13" fill="#fdf5f6" stroke="#cf3b4b" stroke-width="2.1"/><path d="M17.5 7.5 Q15.3 7 14.3 8 Q13.5 8.8 13.5 10.8 V21.5 M10 12.5 H17.3" fill="none" stroke="#cf3b4b" stroke-width="2.0"/></svg>
<svg class="a" style="left:146px;top:183px" width="15" height="17" viewBox="0 0 15 17" ><rect x="2" y="8" width="11" height="8" rx="1.2" fill="#fdf5f6" stroke="#cf3b4b" stroke-width="2.1"/><path d="M4.5 8 V5.5 Q4.5 1.5 7.5 1.5 Q10.5 1.5 10.5 5.5 V8" fill="none" stroke="#cf3b4b" stroke-width="2.1"/></svg>
<div class="ui" style="left:176px;top:168px">TopAppBar(String, () -&gt; Unit, Modifier): Unit</div>
<svg class="a" style="left:107px;top:226px" width="28" height="28" viewBox="0 0 28 28" ><circle cx="14" cy="14" r="13" fill="#fdf5f6" stroke="#cf3b4b" stroke-width="2.1"/><path d="M17.5 7.5 Q15.3 7 14.3 8 Q13.5 8.8 13.5 10.8 V21.5 M10 12.5 H17.3" fill="none" stroke="#cf3b4b" stroke-width="2.0"/></svg>
<svg class="a" style="left:146px;top:231px" width="15" height="17" viewBox="0 0 15 17" ><rect x="2" y="8" width="11" height="8" rx="1.2" fill="#fdf5f6" stroke="#cf3b4b" stroke-width="2.1"/><path d="M4.5 8 V5.5 Q4.5 1.5 7.5 1.5 Q10.5 1.5 10.5 5.5 V8" fill="none" stroke="#cf3b4b" stroke-width="2.1"/></svg>
<div class="ui" style="left:176px;top:216px">FunctionalityNotAvailablePopup(() -&gt; Unit): Unit</div>
<svg class="a" style="left:107px;top:274px" width="28" height="28" viewBox="0 0 28 28" ><circle cx="14" cy="14" r="13" fill="#fdf5f6" stroke="#cf3b4b" stroke-width="2.1"/><path d="M17.5 7.5 Q15.3 7 14.3 8 Q13.5 8.8 13.5 10.8 V21.5 M10 12.5 H17.3" fill="none" stroke="#cf3b4b" stroke-width="2.0"/></svg>
<svg class="a" style="left:146px;top:279px" width="18" height="18" viewBox="0 0 18 18" ><rect x="2" y="8.5" width="10.5" height="8" rx="1.5" fill="#f3faf2" stroke="#2f8a37" stroke-width="2.1"/><path d="M9.5 8.5 V5.5 Q9.5 1.5 12.8 1.5 Q16 1.5 16 5.5 V7" fill="none" stroke="#2f8a37" stroke-width="2.1"/></svg>
<div class="ui" style="left:176px;top:264px">sharePost(Post, Context): Unit</div>
<svg class="a" style="left:107px;top:322px" width="28" height="28" viewBox="0 0 28 28" ><circle cx="14" cy="14" r="13" fill="#fdf5f6" stroke="#cf3b4b" stroke-width="2.1"/><path d="M17.5 7.5 Q15.3 7 14.3 8 Q13.5 8.8 13.5 10.8 V21.5 M10 12.5 H17.3" fill="none" stroke="#cf3b4b" stroke-width="2.0"/></svg>
<svg class="a" style="left:146px;top:327px" width="18" height="18" viewBox="0 0 18 18" ><rect x="2" y="8.5" width="10.5" height="8" rx="1.5" fill="#f3faf2" stroke="#2f8a37" stroke-width="2.1"/><path d="M9.5 8.5 V5.5 Q9.5 1.5 12.8 1.5 Q16 1.5 16 5.5 V7" fill="none" stroke="#2f8a37" stroke-width="2.1"/></svg>
<div class="ui" style="left:176px;top:312px">PreviewArticleDrawer(): Unit</div>
<svg class="a" style="left:107px;top:370px" width="28" height="28" viewBox="0 0 28 28" ><circle cx="14" cy="14" r="13" fill="#fdf5f6" stroke="#cf3b4b" stroke-width="2.1"/><path d="M17.5 7.5 Q15.3 7 14.3 8 Q13.5 8.8 13.5 10.8 V21.5 M10 12.5 H17.3" fill="none" stroke="#cf3b4b" stroke-width="2.0"/></svg>
<svg class="a" style="left:146px;top:375px" width="18" height="18" viewBox="0 0 18 18" ><rect x="2" y="8.5" width="10.5" height="8" rx="1.5" fill="#f3faf2" stroke="#2f8a37" stroke-width="2.1"/><path d="M9.5 8.5 V5.5 Q9.5 1.5 12.8 1.5 Q16 1.5 16 5.5 V7" fill="none" stroke="#2f8a37" stroke-width="2.1"/></svg>
<div class="ui" style="left:176px;top:360px">PreviewArticleNavRail(): Unit</div>
</div>
<div class="a" style="left:617px;top:82px;width:1887px;height:1452px;background:#fff;overflow:hidden">
<div class="a" style="left:0;top:80px;width:1887px;height:2px;background:#ebecf0"></div>
<div class="a" style="left:623px;top:0;width:312px;height:80px;background:#fdf9ea"></div>
<div class="ui" style="right:1649px;top:16.69999999999999px;color:#333">JetnewsGlanceAppWidget.kt</div>
<div class="a" style="left:0;top:0;width:5px;height:78px;background:#fff"></div>
<svg class="a" style="left:327px;top:28px" width="24" height="24" viewBox="0 0 24 24" ><path d="M1.3 1.6 H22 L13.440000000000001 12.0 L22 22.4 H1.3 Z" fill="#f7f4ff" stroke="#6b40e3" stroke-width="2.1" stroke-linejoin="round"/></svg>
<div class="ui" style="left:366px;top:16.69999999999999px;color:#000">ArticleScreen.kt</div>
<svg class="a" style="left:581px;top:31px" width="19" height="19" viewBox="0 0 19 19" ><path d="M2 2 L17 17 M17 2 L2 17" stroke="#9a9da6" stroke-width="2.2" stroke-linecap="round"/></svg>
<div class="a" style="left:299px;top:74px;width:324px;height:8px;border-radius:4px;background:#a8abb6"></div>
<svg class="a" style="left:647px;top:26px" width="28" height="28" viewBox="0 0 28 28" ><path d="M9.97 5.73 L11.42 1.87 L16.58 1.87 L18.03 5.73 Q18.28 6.59 19.14 6.37 L19.14 6.37 L23.21 5.70 L25.79 10.17 L23.18 13.36 Q22.56 14.00 23.18 14.64 L23.18 14.64 L25.79 17.83 L23.21 22.30 L19.14 21.63 Q18.28 21.41 18.03 22.27 L18.03 22.27 L16.58 26.13 L11.42 26.13 L9.97 22.27 Q9.72 21.41 8.86 21.63 L8.86 21.63 L4.79 22.30 L2.21 17.83 L4.82 14.64 Q5.44 14.00 4.82 13.36 L4.82 13.36 L2.21 10.17 L4.79 5.70 L8.86 6.37 Q9.72 6.59 9.97 5.73 Z" fill="none" stroke="#818594" stroke-width="2.3" stroke-linejoin="round"/><circle cx="14" cy="14" r="4.3" fill="none" stroke="#818594" stroke-width="2.3"/></svg>
<div class="ui" style="left:688px;top:16.69999999999999px;color:#333">idea.properties</div>
<svg class="a" style="left:961px;top:28px" width="24" height="24" viewBox="0 0 24 24" ><path d="M1.3 1.6 H22 L13.440000000000001 12.0 L22 22.4 H1.3 Z" fill="#f7f4ff" stroke="#6b40e3" stroke-width="2.1" stroke-linejoin="round"/></svg>
<div class="ui" style="left:1000px;top:16.69999999999999px;color:#333">HomeScreens.kt</div>
<svg class="a" style="left:1291px;top:28px" width="24" height="24" viewBox="0 0 24 24" ><path d="M1.3 1.6 H22 L13.440000000000001 12.0 L22 22.4 H1.3 Z" fill="#f7f4ff" stroke="#6b40e3" stroke-width="2.1" stroke-linejoin="round"/></svg>
<div class="ui" style="left:1330px;top:16.69999999999999px;color:#333">PostContent.kt</div>
<svg class="a" style="left:1590px;top:34px" width="21" height="11" viewBox="0 0 21 11" ><path d="M1.5 1.5 L10.5 9.5 L19.5 1.5" fill="none" stroke="#6c707e" stroke-width="2.4" stroke-linecap="round" stroke-linejoin="round"/></svg>
<div class="a" style="left:1633px;top:20px;width:2px;height:39px;background:#dfe1e5"></div>
<div class="a" style="left:1645px;top:18px;width:48px;height:44px;border-radius:8px;background:#dfe1e5"></div>
<svg class="a" style="left:1657px;top:28px" width="24" height="24" viewBox="0 0 24 24" ><path d="M1 2 H23 M1 9 H23 M1 16 H23 M1 23 H23" stroke="#6c707e" stroke-width="2.3"/></svg>
<svg class="a" style="left:1710px;top:27px" width="30" height="28" viewBox="0 0 30 28" ><path d="M1 3 H8 M1 10 H8 M1 17 H8 M1 24 H8" stroke="#6c707e" stroke-width="2.3"/><rect x="14" y="2" width="14" height="24" rx="4" fill="none" stroke="#6c707e" stroke-width="2.3"/></svg>
<svg class="a" style="left:1767px;top:27px" width="28" height="28" viewBox="0 0 28 28" ><rect x="1.5" y="1.5" width="25" height="25" rx="4" fill="none" stroke="#6c707e" stroke-width="2.3"/><circle cx="18" cy="9" r="3" fill="none" stroke="#6c707e" stroke-width="2.3"/><path d="M1.5 20 L10 12 L26.5 26.5" fill="none" stroke="#6c707e" stroke-width="2.3"/></svg>
<div class="a" style="left:1815px;top:20px;width:2px;height:39px;background:#dfe1e5"></div>
<svg class="a" style="left:1844px;top:26px" width="10" height="28" viewBox="0 0 10 28" ><circle cx="5" cy="3.5" r="2.6" fill="#6c707e"/><circle cx="5" cy="14" r="2.6" fill="#6c707e"/><circle cx="5" cy="24.5" r="2.6" fill="#6c707e"/></svg>
<div class="a" style="left:0;top:83px;width:1887px;height:44px;background:#fdf8e6"></div>
<div class="a" style="left:154px;top:83px;width:828px;height:44px;background:#eef7ea"></div>
<div class="a" style="left:149px;top:82px;width:2px;height:1400px;background:#ebebeb"></div>
<div class="a" style="left:1715px;top:82px;width:2px;height:1400px;background:#e3e3e3"></div>
<div class="a" style="left:1669px;top:86px;width:214px;height:44px;border-radius:10px 10px 0 0;background:#fff"></div>
<svg class="a" style="left:1686px;top:96px" width="26" height="24" viewBox="0 0 26 24" ><path d="M13 1.5 L25 22.5 H1 Z" fill="#e7c13a" stroke="#e7c13a" stroke-width="2" stroke-linejoin="round"/><path d="M13 8 V15" stroke="#fff" stroke-width="3" stroke-linecap="round"/><circle cx="13" cy="19" r="1.6" fill="#fff"/></svg>
<div class="a" style="left:1716px;top:86px;font-size:26px;line-height:44px;color:#444">2</div>
<svg class="a" style="left:1745px;top:96px" width="26" height="30" viewBox="0 0 26 30" ><path d="M2 11 L9 18 L24 2" fill="none" stroke="#4fa14b" stroke-width="3" stroke-linecap="round" stroke-linejoin="round"/><path d="M2 27 L6 23 L10 27 L14 23 L18 27 L22 23" fill="none" stroke="#4fa14b" stroke-width="2" stroke-linejoin="round"/></svg>
<div class="a" style="left:1777px;top:86px;font-size:26px;line-height:44px;color:#444">3</div>
<svg class="a" style="left:1811px;top:103px" width="18" height="10" viewBox="0 0 18 10" ><path d="M1.5 8.5 L9.0 1.5 L16.5 8.5" fill="none" stroke="#6c707e" stroke-width="2.4" stroke-linecap="round" stroke-linejoin="round"/></svg>
<svg class="a" style="left:1853px;top:103px" width="18" height="10" viewBox="0 0 18 10" ><path d="M1.5 1.5 L9.0 8.5 L16.5 1.5" fill="none" stroke="#6c707e" stroke-width="2.4" stroke-linecap="round" stroke-linejoin="round"/></svg>
<div class="a" style="left:1867px;top:138px;width:14px;height:184px;border-radius:7px;background:#c9c9c9"></div>
<div class="a" style="left:1859px;top:196px;width:28px;height:4px;background:rgba(226,192,55,0.85)"></div>
<div class="a" style="left:1859px;top:388px;width:28px;height:4px;background:#e2c037"></div>
<div class="a" style="left:264px;top:258px;width:47px;height:44px;background:#eef7ea"></div>
<div class="a" style="left:213px;top:1358px;width:2px;height:44px;background:#e6e6e6"></div>
<svg class="a" style="left:132px;top:97px" width="9" height="16" viewBox="0 0 9 16" ><path d="M1.5 1.5 L7.5 8.0 L1.5 14.5" fill="none" stroke="#9a9da6" stroke-width="2.2" stroke-linecap="round" stroke-linejoin="round"/></svg>
<svg class="a" style="left:132px;top:273px" width="9" height="16" viewBox="0 0 9 16" ><path d="M1.5 1.5 L7.5 8.0 L1.5 14.5" fill="none" stroke="#9a9da6" stroke-width="2.2" stroke-linecap="round" stroke-linejoin="round"/></svg>
<div class="a" style="left:1329px;top:1274px;width:87px;height:36px;border-radius:7px;background:#efefef"></div>
<div class="a" style="left:1337px;top:1274px;font-size:25px;line-height:36px;color:#8c8c8c">value:</div>
<div class="ln" style="left:0;top:85px;width:78px">1</div>
<div class="code" style="left:155px;top:85px"><span style="color:#5c5c5c;font-weight:bold">/ Copyright 2020 The Android Open Source Project .../</span></div>
<div class="ln" style="left:0;top:129px;width:78px">16</div>
<div class="ln" style="left:0;top:173px;width:78px">17</div>
<div class="code" style="left:155px;top:173px"><span class="kw">package</span> com.example.jetnews.ui.article</div>
<div class="ln" style="left:0;top:217px;width:78px">18</div>
<div class="ln" style="left:0;top:261px;width:78px">19</div>
<div class="code" style="left:155px;top:261px"><span class="kw">import</span> <span style="color:#5c5c5c">...</span></div>
<div class="ln" style="left:0;top:305px;width:78px">70</div>
<div class="ln" style="left:0;top:349px;width:78px">71</div>
<div class="code" style="left:155px;top:349px"><span class="cm">/**</span></div>
<div class="ln" style="left:0;top:393px;width:78px">72</div>
<div class="code" style="left:155px;top:393px"><span class="cm"> * Stateless Article Screen that displays a single post adapting the UI to different screen sizes.</span></div>
<div class="ln" style="left:0;top:437px;width:78px">73</div>
<div class="code" style="left:155px;top:437px"><span class="cm"> *</span></div>
<div class="ln" style="left:0;top:481px;width:78px">74</div>
<div class="code" style="left:155px;top:481px"><span class="cm"> * </span><span class="dt">@param</span><span class="cm"> </span><span class="dp">post</span><span class="cm"> (state) item to display</span></div>
<div class="ln" style="left:0;top:525px;width:78px">75</div>
<div class="code" style="left:155px;top:525px"><span class="cm"> * </span><span class="dt">@param</span><span class="cm"> </span><span class="dp" style="text-decoration:underline wavy #c8c8c8;text-underline-offset:6px;text-decoration-thickness:1.5px">showNavigationIcon</span><span class="cm"> (state) if the navigation icon should be shown</span></div>
<div class="ln" style="left:0;top:569px;width:78px">76</div>
<div class="code" style="left:155px;top:569px"><span class="cm"> * </span><span class="dt">@param</span><span class="cm"> </span><span class="dp">onBack</span><span class="cm"> (event) request navigate back</span></div>
<div class="ln" style="left:0;top:613px;width:78px">77</div>
<div class="code" style="left:155px;top:613px"><span class="cm"> * </span><span class="dt">@param</span><span class="cm"> </span><span class="dp">isFavorite</span><span class="cm"> (state) is this item currently a favorite</span></div>
<div class="ln" style="left:0;top:657px;width:78px">78</div>
<div class="code" style="left:155px;top:657px"><span class="cm"> * </span><span class="dt">@param</span><span class="cm"> </span><span class="dp">onToggleFavorite</span><span class="cm"> (event) request that this post toggle it's favorite state</span></div>
<div class="ln" style="left:0;top:701px;width:78px">79</div>
<div class="code" style="left:155px;top:701px"><span class="cm"> * </span><span class="dt">@param</span><span class="cm"> </span><span class="dp">lazyListState</span><span class="cm"> (state) the </span><span class="dp">[LazyListState]</span><span class="cm"> for the article content</span></div>
<div class="ln" style="left:0;top:745px;width:78px">80</div>
<div class="code" style="left:155px;top:745px"><span class="cm"> */</span></div>
<div class="ln" style="left:0;top:789px;width:78px">81</div>
<div class="code" style="left:155px;top:789px"><span class="an">@OptIn</span>(ExperimentalMaterial3Api::<span class="kw">class</span>)</div>
<div class="ln" style="left:0;top:833px;width:78px">82</div>
<div class="code" style="left:155px;top:833px"><span class="an">@Composable</span></div>
<div class="ln" style="left:0;top:877px;width:78px">83</div>
<div class="code" style="left:155px;top:877px"><span class="kw">fun</span> ArticleScreen(</div>
<div class="ln" style="left:0;top:921px;width:78px">84</div>
<div class="code" style="left:155px;top:921px">    post: Post,</div>
<div class="ln" style="left:0;top:965px;width:78px">85</div>
<div class="code" style="left:155px;top:965px">    isExpandedScreen: Boolean,</div>
<div class="ln" style="left:0;top:1009px;width:78px">86</div>
<div class="code" style="left:155px;top:1009px">    onBack: () -&gt; Unit,</div>
<div class="ln" style="left:0;top:1053px;width:78px">87</div>
<div class="code" style="left:155px;top:1053px">    isFavorite: Boolean,</div>
<div class="ln" style="left:0;top:1097px;width:78px">88</div>
<div class="code" style="left:155px;top:1097px">    onToggleFavorite: () -&gt; Unit,</div>
<div class="ln" style="left:0;top:1141px;width:78px">89</div>
<div class="code" style="left:155px;top:1141px">    modifier: Modifier = Modifier,</div>
<div class="ln" style="left:0;top:1185px;width:78px">90</div>
<div class="code" style="left:155px;top:1185px">    lazyListState: LazyListState = <span class="fn">rememberLazyListState</span>()</div>
<div class="ln" style="left:0;top:1229px;width:78px">91</div>
<div class="code" style="left:155px;top:1229px">) {</div>
<div class="ln" style="left:0;top:1273px;width:78px">92</div>
<div class="code" style="left:155px;top:1273px">    <span class="kw">var</span> <span class="ul">showUnimplementedActionDialog</span> <span class="kw">by</span> <span class="fn">rememberSaveable</span> <span class="bd">{</span> <span class="it">mutableStateOf</span>(<span style="display:inline-block;width:93px"></span><span class="kw">false</span>) <span class="bd">}</span></div>
<div class="ln" style="left:0;top:1317px;width:78px">93</div>
<div class="code" style="left:155px;top:1317px">    <span class="kw">if</span> (<span class="ul">showUnimplementedActionDialog</span>) {</div>
<div class="ln" style="left:0;top:1361px;width:78px">94</div>
<div class="code" style="left:155px;top:1361px">        <span class="fn">FunctionalityNotAvailablePopup</span> <span class="bd">{</span> <span class="ul">showUnimplementedActionDialog</span> = <span class="kw">false</span> <span class="bd">}</span></div>
<div class="ln" style="left:0;top:1405px;width:78px">95</div>
<div class="code" style="left:155px;top:1405px">    }</div>
</div>
<div class="a" style="left:2504px;top:82px;width:82px;height:1452px;background:#f7f8fa;border-left:2px solid #ebecf0"></div>
<svg class="a" style="left:2528px;top:102px" width="36" height="40" viewBox="0 0 36 40" ><path d="M21.6 3.3 Q7.3 3 7.3 14 V20 L3.2 28.6 Q2.8 29.6 4 29.6 H32 Q33.2 29.6 32.8 28.6 L28.6 20.2 V16.8" fill="none" stroke="#6c707e" stroke-width="2.8" stroke-linecap="round" stroke-linejoin="round"/><path d="M14 33 H22 Q22 37.5 18 37.5 Q14 37.5 14 33 Z" fill="#6c707e"/></svg>
<div class="a" style="left:2552px;top:102px;width:14px;height:14px;border-radius:7px;background:#d5606a"></div>
<svg class="a" style="left:2518px;top:174px" width="56" height="52" viewBox="0 0 56 52" ><g fill="none" stroke="#6c707e" stroke-width="2.8" stroke-linecap="round" stroke-linejoin="round"><path d="M10 41 V34 Q10 27 15.5 22 Q20 18.5 25 18.5 Q31 18.5 36 21.5 Q41 24 44 21.5 Q47 18 45 15.5 Q43 13 38.5 16"/><path d="M45 19.5 Q44 28 39 32 Q36 35 36 41 H32 Q30 37.5 28 37.5 Q26 37.5 24 41 H21 Q19 37.5 17 37.5 Q15 37.5 13 41 H10"/><path d="M15.5 22 Q17.5 31 20.5 31.5 Q23 31.5 27 27.5"/><circle cx="33" cy="26.5" r="1.8" fill="#6c707e" stroke="none"/></g></svg>
<svg class="a" style="left:2528px;top:264px" width="38" height="38" viewBox="0 0 38 38" ><path d="M3 36 H2 Q1.5 36 1.5 34 V4 Q1.5 2 4 2 H19 Q21.5 2 21.5 4 V13" fill="none" stroke="#6c707e" stroke-width="2.8"/><path d="M9 7 H13" stroke="#6c707e" stroke-width="2.8"/><path d="M11 35 Q11 22 23 22 Q35 22 35 35 Z" fill="none" stroke="#6c707e" stroke-width="2.8" stroke-linejoin="round"/><path d="M15 19 L17 23 M31 19 L29 23" stroke="#6c707e" stroke-width="2.4"/></svg>
<svg class="a" style="left:2528px;top:340px" width="38" height="42" viewBox="0 0 38 42" ><path d="M5 34 H4 Q1.5 34 1.5 32 V5 Q1.5 3 4 3 H17 Q19.5 3 19.5 5 V10" fill="none" stroke="#6c707e" stroke-width="2.8"/><path d="M9 8 H12" stroke="#6c707e" stroke-width="2.8"/><rect x="11" y="19" width="22" height="12" rx="1.5" fill="none" stroke="#6c707e" stroke-width="2.8"/><path d="M11 37 H33" stroke="#6c707e" stroke-width="2.8"/><circle cx="31" cy="9" r="7" fill="#5fa869"/></svg>
<svg class="a" style="left:2529px;top:424px" width="34" height="36" viewBox="0 0 34 36" ><path d="M17 1 Q19 16 33 18 Q19 20 17 35 Q15 20 1 18 Q15 16 17 1 Z" fill="#6c707e"/></svg>
<svg class="a" style="left:2528px;top:504px" width="38" height="40" viewBox="0 0 38 40" ><path d="M8 34 H4 Q1.5 34 1.5 32 V4 Q1.5 2 4 2 H17 Q19.5 2 19.5 4 V12" fill="none" stroke="#6c707e" stroke-width="2.8"/><path d="M20 26 L28 19 Q32 16 35 20 Q37 24 33 27 L30 30 M25 22 L17 29 Q14 33 17 36 Q21 38 24 35 L26 33" fill="none" stroke="#6c707e" stroke-width="2.8" stroke-linecap="round"/></svg>
<div class="a" style="left:2522px;top:572px;width:48px;height:2px;background:#dfe1e5"></div>
<svg class="a" style="left:2528px;top:607px" width="38" height="40" viewBox="0 0 38 40" ><path d="M8 34 H4 Q1.5 34 1.5 32 V4 Q1.5 2 4 2 H17 Q19.5 2 19.5 4 V12" fill="none" stroke="#6c707e" stroke-width="2.8"/><path d="M9 8 H12" stroke="#6c707e" stroke-width="2.8"/><circle cx="23" cy="25" r="7" fill="none" stroke="#6c707e" stroke-width="2.8"/><path d="M28 30 L35 37" stroke="#6c707e" stroke-width="2.8" stroke-linecap="round"/></svg>
<svg class="a" style="left:2527px;top:1475px" width="38" height="38" viewBox="0 0 38 38" ><circle cx="19" cy="19" r="16.5" fill="none" stroke="#6c707e" stroke-width="2.8"/><path d="M19 10 V21" stroke="#6c707e" stroke-width="3.2" stroke-linecap="round"/><circle cx="19" cy="26.5" r="2" fill="#6c707e"/></svg>
<div class="a" style="left:0;top:1534px;width:2586px;height:60px;background:#f7f8fa;border-top:2px solid #ebecf0"></div>
<svg class="a" style="left:28px;top:1556px" width="16" height="16" viewBox="0 0 16 16" ><rect x="1.2" y="1.2" width="13.6" height="13.6" rx="3.5" fill="#e7effd" stroke="#3574f0" stroke-width="2.4"/></svg>
<div class="ui" style="left:53px;top:1537.8px;color:#6c707e">JetNews</div>
<svg class="a" style="left:180px;top:1554px" width="10" height="17" viewBox="0 0 10 17" ><path d="M1.5 1.5 L8.5 8.5 L1.5 15.5" fill="none" stroke="#818594" stroke-width="2.2" stroke-linecap="round" stroke-linejoin="round"/></svg>
<svg class="a" style="left:210px;top:1556px" width="16" height="16" viewBox="0 0 16 16" ><rect x="1.2" y="1.2" width="13.6" height="13.6" rx="3.5" fill="#e7effd" stroke="#3574f0" stroke-width="2.4"/></svg>
<div class="ui" style="left:234px;top:1537.8px;color:#6c707e">app</div>
<svg class="a" style="left:301px;top:1554px" width="10" height="17" viewBox="0 0 10 17" ><path d="M1.5 1.5 L8.5 8.5 L1.5 15.5" fill="none" stroke="#818594" stroke-width="2.2" stroke-linecap="round" stroke-linejoin="round"/></svg>
<div class="ui" style="left:331px;top:1537.8px;color:#6c707e">src</div>
<svg class="a" style="left:387px;top:1554px" width="10" height="17" viewBox="0 0 10 17" ><path d="M1.5 1.5 L8.5 8.5 L1.5 15.5" fill="none" stroke="#818594" stroke-width="2.2" stroke-linecap="round" stroke-linejoin="round"/></svg>
<svg class="a" style="left:416px;top:1556px" width="16" height="16" viewBox="0 0 16 16" ><rect x="1.2" y="1.2" width="13.6" height="13.6" rx="3.5" fill="#e7effd" stroke="#3574f0" stroke-width="2.4"/></svg>
<div class="ui" style="left:441px;top:1537.8px;color:#6c707e">main</div>
<svg class="a" style="left:518px;top:1554px" width="10" height="17" viewBox="0 0 10 17" ><path d="M1.5 1.5 L8.5 8.5 L1.5 15.5" fill="none" stroke="#818594" stroke-width="2.2" stroke-linecap="round" stroke-linejoin="round"/></svg>
<div class="ui" style="left:548px;top:1537.8px;color:#6c707e">java</div>
<svg class="a" style="left:615px;top:1554px" width="10" height="17" viewBox="0 0 10 17" ><path d="M1.5 1.5 L8.5 8.5 L1.5 15.5" fill="none" stroke="#818594" stroke-width="2.2" stroke-linecap="round" stroke-linejoin="round"/></svg>
<div class="ui" style="left:646px;top:1537.8px;color:#6c707e">com</div>
<svg class="a" style="left:718px;top:1554px" width="10" height="17" viewBox="0 0 10 17" ><path d="M1.5 1.5 L8.5 8.5 L1.5 15.5" fill="none" stroke="#818594" stroke-width="2.2" stroke-linecap="round" stroke-linejoin="round"/></svg>
<div class="ui" style="left:748px;top:1537.8px;color:#6c707e">example</div>
<svg class="a" style="left:870px;top:1554px" width="10" height="17" viewBox="0 0 10 17" ><path d="M1.5 1.5 L8.5 8.5 L1.5 15.5" fill="none" stroke="#818594" stroke-width="2.2" stroke-linecap="round" stroke-linejoin="round"/></svg>
<div class="ui" style="left:899px;top:1537.8px;color:#6c707e">jetnews</div>
<svg class="a" style="left:1014px;top:1554px" width="10" height="17" viewBox="0 0 10 17" ><path d="M1.5 1.5 L8.5 8.5 L1.5 15.5" fill="none" stroke="#818594" stroke-width="2.2" stroke-linecap="round" stroke-linejoin="round"/></svg>
<div class="ui" style="left:1045px;top:1537.8px;color:#6c707e">ui</div>
<svg class="a" style="left:1084px;top:1554px" width="10" height="17" viewBox="0 0 10 17" ><path d="M1.5 1.5 L8.5 8.5 L1.5 15.5" fill="none" stroke="#818594" stroke-width="2.2" stroke-linecap="round" stroke-linejoin="round"/></svg>
<div class="ui" style="left:1114px;top:1537.8px;color:#6c707e">article</div>
<svg class="a" style="left:1209px;top:1554px" width="10" height="17" viewBox="0 0 10 17" ><path d="M1.5 1.5 L8.5 8.5 L1.5 15.5" fill="none" stroke="#818594" stroke-width="2.2" stroke-linecap="round" stroke-linejoin="round"/></svg>
<div class="a" style="left:1230px;top:1542px;width:252px;height:42px;border-radius:7px;background:#dfe1e5"></div>
<svg class="a" style="left:1242px;top:1551px" width="24" height="24" viewBox="0 0 24 24" ><path d="M1.3 1.6 H22 L13.440000000000001 12.0 L22 22.4 H1.3 Z" fill="#f7f4ff" stroke="#6b40e3" stroke-width="2.1" stroke-linejoin="round"/></svg>
<div class="ui" style="left:1279px;top:1537.8px;color:#000">ArticleScreen.kt</div>
<div class="ui" style="left:2072px;top:1537.8px;color:#6c707e">1:1</div>
<div class="ui" style="left:2137px;top:1537.8px;color:#6c707e">LF</div>
<div class="ui" style="left:2199px;top:1537.8px;color:#6c707e">UTF-8</div>
<svg class="a" style="left:2313px;top:1551px" width="27" height="27" viewBox="0 0 27 27" ><path d="M2 2 H25 V24 L20 20 H2 Z" fill="none" stroke="#6c707e" stroke-width="2.3" stroke-linejoin="round"/><path d="M13.5 6 V12" stroke="#6c707e" stroke-width="2.3"/><circle cx="13.5" cy="15.5" r="1.3" fill="#6c707e"/></svg>
<div class="ui" style="left:2375px;top:1537.8px;color:#6c707e">4 spaces</div>
<svg class="a" style="left:2523px;top:1551px" width="28" height="26" viewBox="0 0 28 26" ><rect x="1.5" y="11" width="17" height="13" rx="3" fill="none" stroke="#6c707e" stroke-width="2.3"/><path d="M14 11 V7 Q14 1.5 19.5 1.5 Q25 1.5 25 7 V10" fill="none" stroke="#6c707e" stroke-width="2.3" stroke-linecap="round"/><path d="M10 15.5 V19.5" stroke="#6c707e" stroke-width="2.3"/></svg>
</div></body></html>
